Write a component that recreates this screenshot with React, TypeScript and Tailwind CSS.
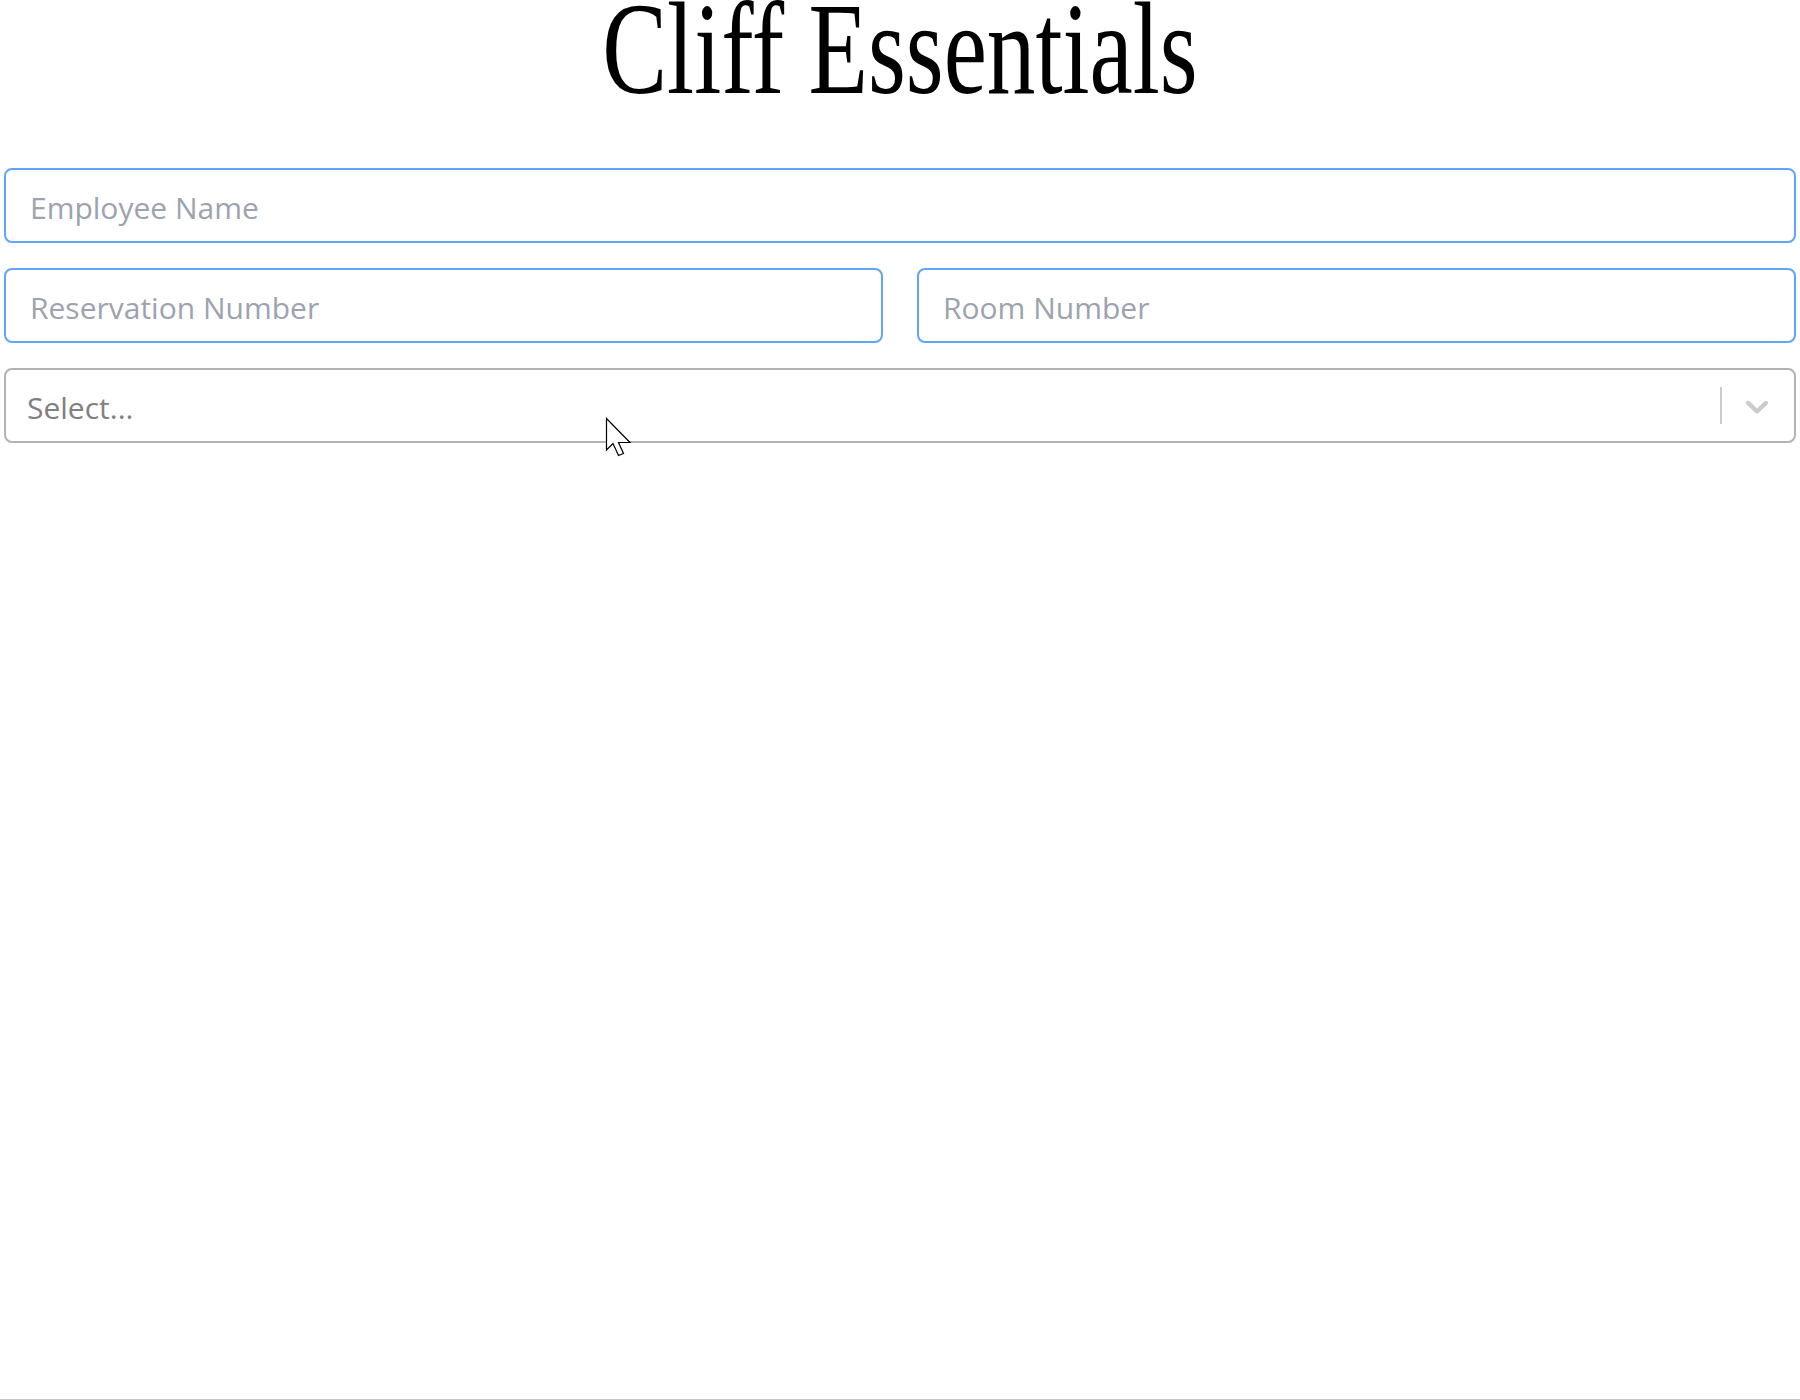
import React from "react";

const inputCls =
  "block h-[75px] rounded-[8px] border-2 border-[#60a5fa] bg-white pl-[24px] pr-4 pt-[4px] text-[30px] text-gray-800 placeholder:text-[#9ca3af] outline-none";

export default function App() {
  return (
    <div
      className="relative h-[1400px] overflow-hidden border-b border-[#c4c4c4] bg-white"
      style={{ fontFamily: '"Open Sans", "Noto Sans", sans-serif' }}
    >
      <h1
        className="m-0 text-center text-[132px] font-normal leading-[97px] text-black"
        style={{ fontFamily: '"Liberation Serif", "Times New Roman", serif' }}
      >
        <span className="inline-block scale-x-[0.737] whitespace-nowrap">Cliff Essentials</span>
      </h1>

      <div className="mt-[71px] flex flex-col gap-[25px] pl-[4px] pr-[4px]">
        <input className={inputCls + " w-full"} placeholder="Employee Name" />
        <div className="flex gap-[34px]">
          <input className={inputCls + " min-w-0 flex-1"} placeholder="Reservation Number" />
          <input className={inputCls + " min-w-0 flex-1"} placeholder="Room Number" />
        </div>
        <div className="flex h-[75px] items-center rounded-[8px] border-2 border-[#b3b3b3] bg-white">
          <div className="flex-1 pl-[21px] pt-[4px] text-[30px] text-[#808080]">Select...</div>
          <div className="flex items-center self-stretch">
            <span className="my-[17px] w-[2px] self-stretch bg-[#cccccc]" />
            <div className="pl-[16px] pr-[18px]">
              <svg width="38" height="38" viewBox="0 0 20 20" fill="#cccccc" aria-hidden="true">
                <path d="M4.516 7.548c0.436-0.446 1.043-0.481 1.576 0l3.908 3.747 3.908-3.747c0.533-0.481 1.141-0.446 1.574 0 0.436 0.445 0.408 1.197 0 1.615-0.406 0.418-4.695 4.502-4.695 4.502-0.217 0.223-0.502 0.335-0.787 0.335s-0.57-0.112-0.789-0.335c0 0-4.287-4.084-4.695-4.502s-0.436-1.170 0-1.615z" />
              </svg>
            </div>
          </div>
        </div>
      </div>

      <svg
        className="pointer-events-none absolute left-[604px] top-[416px]"
        width="32"
        height="42"
        viewBox="0 0 32 42"
      >
        <polygon
          points="2.5,2.5 2.5,34 9,27.5 14.5,39.5 19.5,37.5 14.5,26.5 26,26.5"
          fill="#ffffff"
          stroke="#000000"
          strokeWidth="1.2"
          strokeLinejoin="miter"
        />
      </svg>
    </div>
  );
}
